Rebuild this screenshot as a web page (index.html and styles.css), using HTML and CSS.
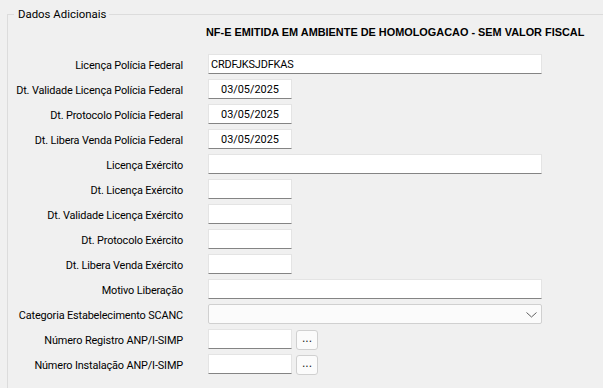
FILE: index.html
```html
<!DOCTYPE html>
<html lang="pt-BR">
<head>
    <meta charset="UTF-8">
    <title>Dados Adicionais</title>
    <link rel="stylesheet" href="styles.css">
</head>
<body>
    <fieldset class="group">
        <legend>Dados Adicionais</legend>

        <div class="aviso">NF-E EMITIDA EM AMBIENTE DE HOMOLOGACAO - SEM VALOR FISCAL</div>

        <div class="form">
            <label>Licença Polícia Federal</label>
            <div class="field"><input class="txt wide" type="text" value="CRDFJKSJDFKAS"></div>

            <label>Dt. Validade Licença Polícia Federal</label>
            <div class="field"><input class="txt date" type="text" value="03/05/2025"></div>

            <label>Dt. Protocolo Polícia Federal</label>
            <div class="field"><input class="txt date" type="text" value="03/05/2025"></div>

            <label>Dt. Libera Venda Polícia Federal</label>
            <div class="field"><input class="txt date" type="text" value="03/05/2025"></div>

            <label>Licença Exército</label>
            <div class="field"><input class="txt wide" type="text"></div>

            <label>Dt. Licença Exército</label>
            <div class="field"><input class="txt date" type="text"></div>

            <label>Dt. Validade Licença Exército</label>
            <div class="field"><input class="txt date" type="text"></div>

            <label>Dt. Protocolo Exército</label>
            <div class="field"><input class="txt date" type="text"></div>

            <label>Dt. Libera Venda Exército</label>
            <div class="field"><input class="txt date" type="text"></div>

            <label>Motivo Liberação</label>
            <div class="field"><input class="txt wide" type="text"></div>

            <label>Categoria Estabelecimento SCANC</label>
            <div class="field">
                <div class="combo">
                    <svg class="chevron" width="11" height="6" viewBox="0 0 11 6"><path d="M0.5 0.5 L5.5 5 L10.5 0.5" fill="none" stroke="#606060" stroke-width="1"/></svg>
                </div>
            </div>

            <label>Número Registro ANP/I-SIMP</label>
            <div class="field"><input class="txt num" type="text"><button class="btn">...</button></div>

            <label>Número Instalação ANP/I-SIMP</label>
            <div class="field"><input class="txt num" type="text"><button class="btn">...</button></div>
        </div>
    </fieldset>
</body>
</html>
```

FILE: styles.css
```css
html, body {
    height: 100%;
}
body {
    margin: 0;
    background: #f0f0f0;
    font-family: Roboto, 'Liberation Sans', sans-serif;
    font-size: 10.9px;
    letter-spacing: -0.15px;
    color: #000;
    overflow: hidden;
}
.group {
    box-sizing: border-box;
    height: calc(100% - 6px);
    margin: 6px 0 0 7px;
    padding: 0;
    border: 1px solid #dcdcdc;
    border-right: none;
    border-bottom: none;
}
.group legend {
    margin-left: 6px;
    padding: 0 3px 0 4px;
    line-height: 16px;
    font-size: 11.4px;
    letter-spacing: 0;
    color: #000;
}
.aviso {
    margin: 4px 0 0 198px;
    font-family: 'Liberation Sans', Arial, sans-serif;
    font-weight: bold;
    font-size: 10.9px;
    letter-spacing: 0;
    height: 28px;
    white-space: nowrap;
}
.form {
    display: grid;
    grid-template-columns: 175px 1fr;
    column-gap: 25px;
    row-gap: 5px;
}
.form label {
    text-align: right;
    padding-top: 3px;
    line-height: 17px;
    white-space: nowrap;
}
.field {
    display: flex;
    gap: 4px;
    height: 20px;
}
.txt {
    box-sizing: border-box;
    height: 20px;
    margin: 0;
    padding: 0 2px;
    border: 1px solid #e4e4e4;
    border-bottom: 1px solid #848484;
    background: #fff;
    font-family: Roboto, 'Liberation Sans', sans-serif;
    font-size: 10.9px;
    letter-spacing: -0.15px;
    color: #000;
    outline: none;
}
.wide { width: 334px; }
.date { width: 84px; text-align: center; letter-spacing: 0; }
.num { width: 84px; }
.combo {
    box-sizing: border-box;
    position: relative;
    width: 334px;
    height: 20px;
    border: 1px solid #d0d0d0;
    border-radius: 2px;
    background: #fbfbfb;
}
.chevron {
    position: absolute;
    right: 4px;
    top: 7px;
}
.btn {
    box-sizing: border-box;
    width: 22px;
    height: 20px;
    margin: 1px 0 0 0;
    padding: 0 0 4px 0;
    border: 1px solid #d0d0d0;
    border-radius: 3px;
    background: #fbfbfb;
    font-family: 'Liberation Sans', Arial, sans-serif;
    font-size: 12px;
    line-height: 12px;
    letter-spacing: 0;
    color: #1a1a1a;
}
```
